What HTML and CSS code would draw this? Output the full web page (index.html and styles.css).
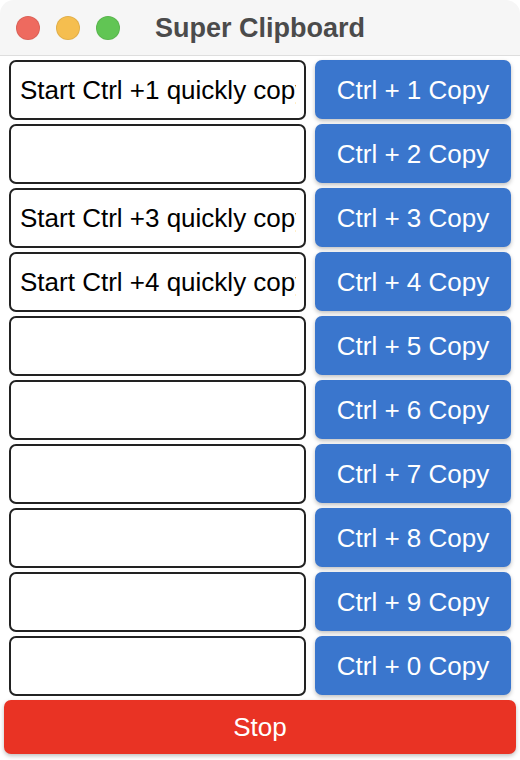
FILE: index.html
```html
<!DOCTYPE html>
<html lang="en">
<head>
  <meta charset="UTF-8">
  <title>Super Clipboard</title>
  <link rel="stylesheet" href="styles.css">
</head>
<body>
  <div class="window">
    <div class="titlebar">
      <div class="lights">
        <span class="light red"></span>
        <span class="light yellow"></span>
        <span class="light green"></span>
      </div>
      <div class="title">Super Clipboard</div>
      <div></div>
    </div>
    <div class="content">
      <div class="slots">
        <input class="slot-input" type="text" value="Start Ctrl +1 quickly copy">
        <button class="copy-btn">Ctrl + 1 Copy</button>
        <input class="slot-input" type="text" value="">
        <button class="copy-btn">Ctrl + 2 Copy</button>
        <input class="slot-input" type="text" value="Start Ctrl +3 quickly copy">
        <button class="copy-btn">Ctrl + 3 Copy</button>
        <input class="slot-input" type="text" value="Start Ctrl +4 quickly copy">
        <button class="copy-btn">Ctrl + 4 Copy</button>
        <input class="slot-input" type="text" value="">
        <button class="copy-btn">Ctrl + 5 Copy</button>
        <input class="slot-input" type="text" value="">
        <button class="copy-btn">Ctrl + 6 Copy</button>
        <input class="slot-input" type="text" value="">
        <button class="copy-btn">Ctrl + 7 Copy</button>
        <input class="slot-input" type="text" value="">
        <button class="copy-btn">Ctrl + 8 Copy</button>
        <input class="slot-input" type="text" value="">
        <button class="copy-btn">Ctrl + 9 Copy</button>
        <input class="slot-input" type="text" value="">
        <button class="copy-btn">Ctrl + 0 Copy</button>
      </div>
      <button class="stop-btn">Stop</button>
    </div>
  </div>
</body>
</html>
```

FILE: styles.css
```css
html, body {
  margin: 0;
  padding: 0;
  background: #ffffff;
  font-family: "Liberation Sans", Arial, sans-serif;
}
.window {
  width: 520px;
  height: 760px;
  background: #ffffff;
  border-radius: 14px 14px 0 0;
  overflow: hidden;
}
.titlebar {
  height: 55px;
  background: #f6f6f6;
  border-bottom: 1px solid #dedede;
  display: grid;
  grid-template-columns: 1fr auto 1fr;
  align-items: center;
}
.lights {
  display: flex;
  gap: 16px;
  padding-left: 16px;
  padding-top: 1px;
}
.light {
  width: 22px;
  height: 22px;
  border-radius: 50%;
  border: 1px solid rgba(0,0,0,0.08);
}
.light.red { background: #ee6a5f; }
.light.yellow { background: #f5be4f; }
.light.green { background: #61c554; }
.title {
  font-size: 27px;
  font-weight: bold;
  color: #4b4b4b;
  padding-top: 1px;
}
.content {
  padding: 4px 4px 0;
  display: flex;
  flex-direction: column;
  gap: 4px;
}
.slots {
  display: grid;
  grid-template-columns: 297px 196px;
  grid-auto-rows: 60px;
  column-gap: 9px;
  row-gap: 4px;
  padding: 0 5px;
}
.slot-input {
  box-sizing: border-box;
  width: 100%;
  height: 60px;
  margin: 0;
  border: 2px solid #222222;
  border-radius: 7px;
  padding: 0 8px 0 9px;
  font-family: "Liberation Sans", Arial, sans-serif;
  font-size: 26px;
  color: #000000;
  background: #ffffff;
  outline: none;
}
.copy-btn {
  height: 59px;
  margin: 0;
  padding: 2px 0 0;
  border: none;
  border-radius: 7px;
  background: #3a76cd;
  color: #ffffff;
  font-family: "Liberation Sans", Arial, sans-serif;
  font-size: 26px;
  box-shadow: 0 2px 4px rgba(0,0,0,0.25);
  cursor: pointer;
}
.stop-btn {
  height: 54px;
  margin: 0;
  border: none;
  border-radius: 7px;
  background: #e93324;
  color: #ffffff;
  font-family: "Liberation Sans", Arial, sans-serif;
  font-size: 26px;
  box-shadow: 0 2px 4px rgba(0,0,0,0.25);
  cursor: pointer;
}
```
